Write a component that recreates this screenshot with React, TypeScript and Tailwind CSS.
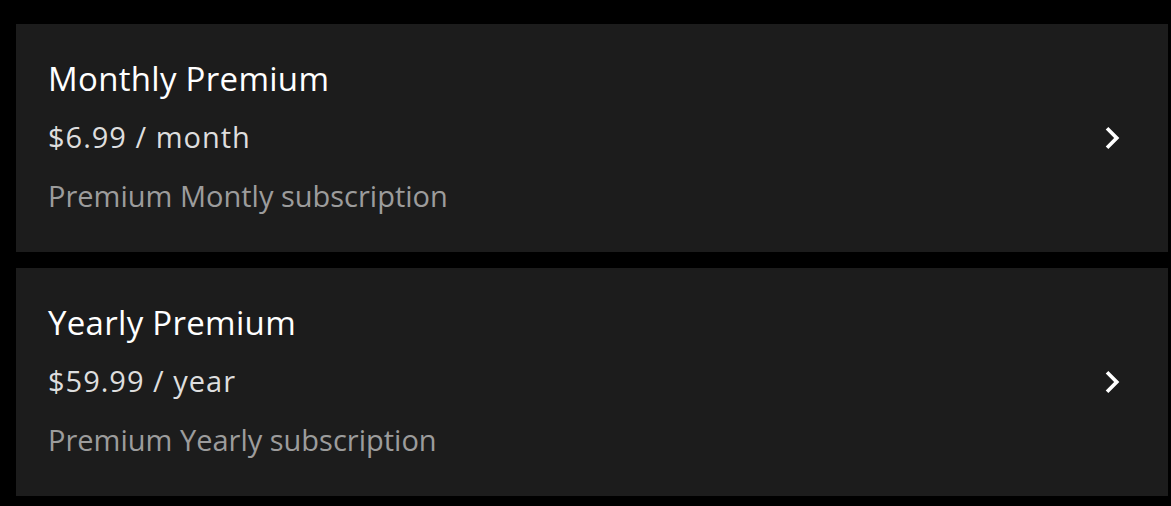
const plans = [
  { title: "Monthly Premium", price: "$6.99 / month", note: "Premium Montly subscription" },
  { title: "Yearly Premium", price: "$59.99 / year", note: "Premium Yearly subscription" },
];

function Chevron() {
  return (
    <svg viewBox="0 0 24 24" className="h-11 w-11 shrink-0" fill="#ffffff" aria-hidden="true">
      <path d="M10 6L8.59 7.41 13.17 12l-4.58 4.59L10 18l6-6z" />
    </svg>
  );
}

export default function App() {
  return (
    <div className="min-h-[506px] bg-black pt-6 pb-[10px] pl-4 pr-[3px] font-['Open_Sans',sans-serif]">
      <div className="flex flex-col gap-4">
        {plans.map((p) => (
          <div
            key={p.title}
            className="flex items-center justify-between bg-[#1c1c1c] pl-8 pr-[34px] pt-[26px] pb-[27px]"
          >
            <div className="flex flex-col">
              <span className="text-[33px] font-medium leading-[58px] tracking-[0.3px] text-white">
                {p.title}
              </span>
              <span className="text-[29px] leading-[58px] tracking-[1px] text-[#dedede]">{p.price}</span>
              <span className="text-[29px] leading-[59px] text-[#9c9c9c]">{p.note}</span>
            </div>
            <Chevron />
          </div>
        ))}
      </div>
    </div>
  );
}
